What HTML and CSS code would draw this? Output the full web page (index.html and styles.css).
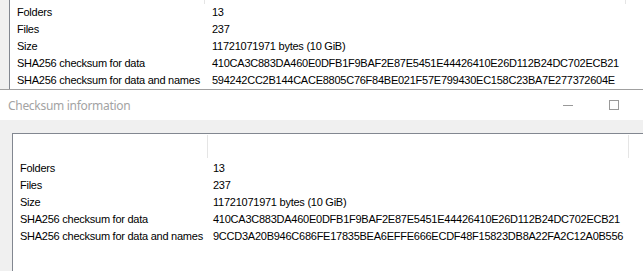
FILE: index.html
```html
<!DOCTYPE html>
<html>
<head>
<meta charset="utf-8">
<link rel="stylesheet" href="styles.css">
</head>
<body>
<div class="top">
  <div class="list list-top">
    <div class="hdr hdr-top">
      <div class="hcell c1"></div><div class="sep"></div>
      <div class="hcell c2"></div><div class="sep"></div>
    </div>
    <div class="row"><span class="c1 lbl">Folders</span><span class="val">13</span></div>
    <div class="row"><span class="c1 lbl">Files</span><span class="val">237</span></div>
    <div class="row"><span class="c1 lbl">Size</span><span class="val">11721071971 bytes (10 GiB)</span></div>
    <div class="row"><span class="c1 lbl">SHA256 checksum for data</span><span class="val">410CA3C883DA460E0DFB1F9BAF2E87E5451E44426410E26D112B24DC702ECB21</span></div>
    <div class="row"><span class="c1 lbl">SHA256 checksum for data and names</span><span class="val">594242CC2B144CACE8805C76F84BE021F57E799430EC158C23BA7E277372604E</span></div>
  </div>
</div>
<div class="titlebar">
  <span class="title">Checksum information</span>
  <div class="btn"><span class="min-glyph"></span></div>
  <div class="btn"><span class="max-glyph"></span></div>
  <div class="btn btn-cut"></div>
</div>
<div class="client">
  <div class="list list-bottom">
    <div class="hdr hdr-bottom">
      <div class="hcell c1"></div><div class="sep"></div>
      <div class="hcell c2"></div><div class="sep"></div>
    </div>
    <div class="row"><span class="c1 lbl">Folders</span><span class="val">13</span></div>
    <div class="row"><span class="c1 lbl">Files</span><span class="val">237</span></div>
    <div class="row"><span class="c1 lbl">Size</span><span class="val">11721071971 bytes (10 GiB)</span></div>
    <div class="row"><span class="c1 lbl">SHA256 checksum for data</span><span class="val">410CA3C883DA460E0DFB1F9BAF2E87E5451E44426410E26D112B24DC702ECB21</span></div>
    <div class="row"><span class="c1 lbl">SHA256 checksum for data and names</span><span class="val">9CCD3A20B946C686FE17835BEA6EFFE666ECDF48F15823DB8A22FA2C12A0B556</span></div>
  </div>
</div>
</body>
</html>
```
FILE: styles.css
```css
html, body {
  margin: 0;
  padding: 0;
  width: 643px;
  height: 271px;
  overflow: hidden;
  background: #f0f0f0;
  font-family: "Liberation Sans", Arial, sans-serif;
  font-size: 11px;
  color: #000;
}

.top {
  height: 89px;
  border-bottom: 1px solid #a0a0a0;
  padding-left: 9px;
  display: flex;
  overflow: hidden;
}

.list {
  background: #fff;
  border-left: 1px solid #828790;
  flex: 1;
}

.hdr {
  display: flex;
}

.hdr-top {
  height: 4px;
  align-items: flex-start;
}

.hdr-top .sep {
  height: 4px;
}

.hdr-bottom {
  height: 26px;
}

.hdr-bottom .sep {
  margin-top: 1px;
  height: 23px;
}

.hcell.c1 { width: 194px; }
.hcell.c2 { width: 420px; }

.sep {
  width: 1px;
  background: #e5e5e5;
}

.row {
  height: 17px;
  line-height: 17px;
  display: flex;
  white-space: nowrap;
  letter-spacing: -0.25px;
}

.row .c1 {
  width: 195px;
  flex: none;
  padding-left: 7px;
  box-sizing: border-box;
}

.list-bottom .row .c1 {
  width: 194px;
}

.val {
  padding-left: 7px;
}

.list-bottom .val {
  padding-left: 6px;
}

.titlebar {
  height: 30px;
  background: #fff;
  display: flex;
  align-items: center;
}

.title {
  font-family: "Noto Sans", "Open Sans", sans-serif;
  font-size: 12px;
  letter-spacing: -0.3px;
  color: #a3a3a3;
  padding-left: 8px;
  flex: 1;
}

.btn {
  width: 46px;
  height: 30px;
  display: flex;
  align-items: center;
  justify-content: center;
}

.btn-cut {
  width: 6px;
}

.min-glyph {
  width: 10px;
  height: 1px;
  background: #999;
}

.max-glyph {
  width: 8px;
  height: 8px;
  border: 1px solid #999;
}

.client {
  padding: 13px 0 0 12px;
  height: 138px;
}

.list-bottom {
  border-top: 1px solid #828790;
  height: 137px;
}
```
